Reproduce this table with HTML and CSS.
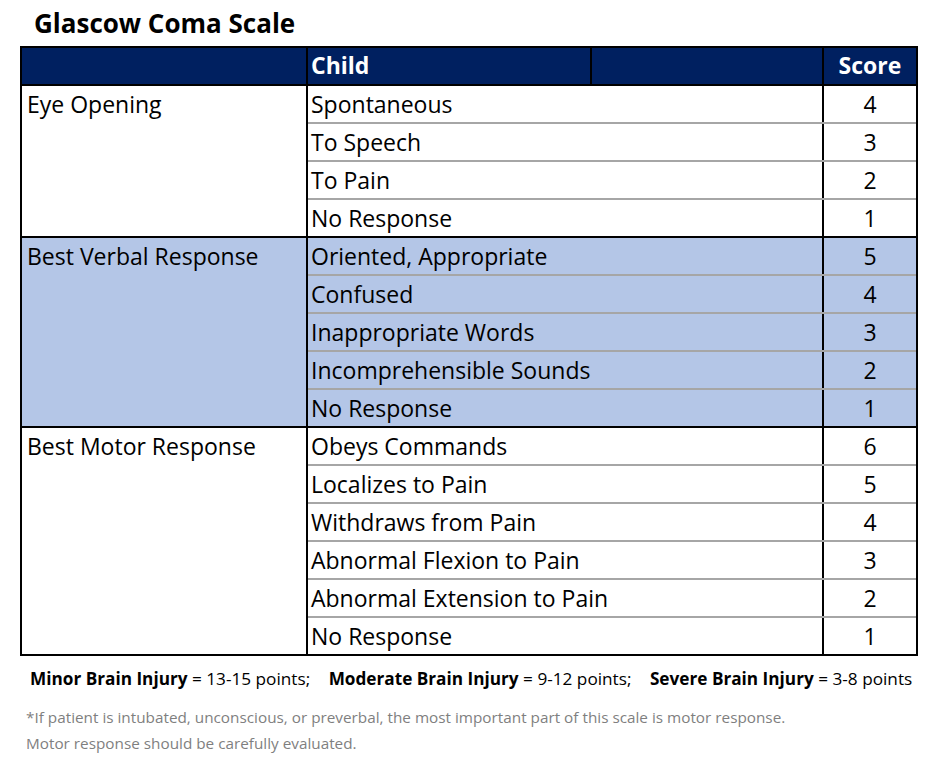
FILE: index.html
```html
<!DOCTYPE html>
<html lang="en">
<head>
<meta charset="utf-8">
<title>Glascow Coma Scale</title>
<link rel="stylesheet" href="styles.css">
</head>
<body>
<h1 class="title">Glascow Coma Scale</h1>
<div class="gcs">
  <div class="head">
    <div class="hcell"></div>
    <div class="hcell child">Child</div>
    <div class="hcell blank"></div>
    <div class="hcell score">Score</div>
  </div>

  <div class="group">
    <div class="label">Eye Opening</div>
    <div class="rows">
      <div class="row"><div class="resp">Spontaneous</div><div class="num">4</div></div>
      <div class="row"><div class="resp">To Speech</div><div class="num">3</div></div>
      <div class="row"><div class="resp">To Pain</div><div class="num">2</div></div>
      <div class="row"><div class="resp">No Response</div><div class="num">1</div></div>
    </div>
  </div>

  <div class="group shaded">
    <div class="label">Best Verbal Response</div>
    <div class="rows">
      <div class="row"><div class="resp">Oriented, Appropriate</div><div class="num">5</div></div>
      <div class="row"><div class="resp">Confused</div><div class="num">4</div></div>
      <div class="row"><div class="resp">Inappropriate Words</div><div class="num">3</div></div>
      <div class="row"><div class="resp">Incomprehensible Sounds</div><div class="num">2</div></div>
      <div class="row"><div class="resp">No Response</div><div class="num">1</div></div>
    </div>
  </div>

  <div class="group">
    <div class="label">Best Motor Response</div>
    <div class="rows">
      <div class="row"><div class="resp">Obeys Commands</div><div class="num">6</div></div>
      <div class="row"><div class="resp">Localizes to Pain</div><div class="num">5</div></div>
      <div class="row"><div class="resp">Withdraws from Pain</div><div class="num">4</div></div>
      <div class="row"><div class="resp">Abnormal Flexion to Pain</div><div class="num">3</div></div>
      <div class="row"><div class="resp">Abnormal Extension to Pain</div><div class="num">2</div></div>
      <div class="row"><div class="resp">No Response</div><div class="num">1</div></div>
    </div>
  </div>
</div>

<p class="legend">
  <span class="seg"><b>Minor Brain Injury</b> = 13-15 points;</span>
  <span class="seg"><b>Moderate Brain Injury</b> = 9-12 points;</span>
  <span class="seg"><b>Severe Brain Injury</b> = 3-8 points</span>
</p>

<p class="note">*If patient is intubated, unconscious, or preverbal, the most important part of this scale is motor response.<br>Motor response should be carefully evaluated.</p>
</body>
</html>
```

FILE: styles.css
```css
* { box-sizing: border-box; }

html, body {
  margin: 0;
  padding: 0;
  background: #ffffff;
}

body {
  font-family: "Open Sans", "Noto Sans", "Liberation Sans", sans-serif;
  color: #000000;
  width: 942px;
}

.title {
  margin: 8px 0 8px 34px;
  font-size: 26px;
  line-height: 30px;
  font-weight: 700;
}

.gcs {
  margin-left: 20px;
  width: 898px;
  border: 2px solid #000000;
  font-size: 23px;
}

.head {
  display: grid;
  grid-template-columns: 284px 284px 232px 94px;
  background: #002060;
  color: #ffffff;
  font-weight: 700;
  border-bottom: 2px solid #000000;
}

.hcell {
  height: 36px;
  padding-bottom: 3px;
  display: flex;
  align-items: center;
}

.hcell + .hcell { border-left: 2px solid #000000; }

.child { padding-left: 3px; }

.score { justify-content: center; }

.group {
  display: grid;
  grid-template-columns: 284px 1fr;
  border-bottom: 2px solid #000000;
}

.group:last-child { border-bottom: 0; }

.shaded { background: #b4c6e7; }

.label {
  height: 36px;
  display: flex;
  align-items: center;
  padding-left: 5px;
}

.rows {
  border-left: 2px solid #000000;
}

.row {
  display: grid;
  grid-template-columns: 514px 94px;
  height: 38px;
  border-bottom: 2px solid #a6a6a6;
}

.row:last-child {
  height: 36px;
  border-bottom: 0;
}

.resp, .num {
  height: 36px;
  display: flex;
  align-items: center;
}

.resp { padding-left: 3px; }

.num {
  justify-content: center;
  border-left: 2px solid #000000;
}

.legend {
  margin: 13px 0 0 30px;
  font-size: 17.2px;
  line-height: 20px;
  white-space: nowrap;
}

.seg { margin-right: 14px; }

.note {
  margin: 15px 0 0 26px;
  font-size: 15.3px;
  line-height: 26px;
  color: #7f7f7f;
}
```
